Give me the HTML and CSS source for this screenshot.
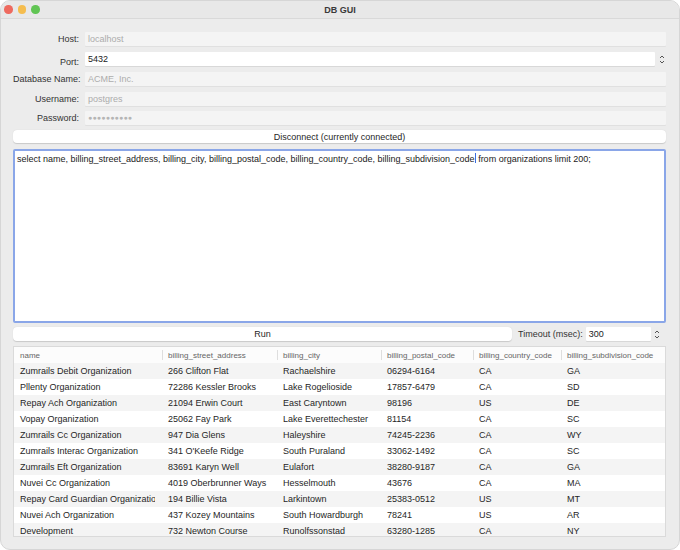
FILE: index.html
```html
<!DOCTYPE html>
<html lang="en">
  <head>
    <meta charset="UTF-8" />
    <title>DB GUI</title>
    <link rel="stylesheet" href="styles.css">
  </head>
  <body>
    <div class="window">
      <!-- Title bar -->
      <div class="titlebar">
        <div class="lights">
          <span class="light red"></span>
          <span class="light yellow"></span>
          <span class="light green"></span>
        </div>
        <div class="title">DB GUI</div>
      </div>

      <div class="content">
        <!-- Connection form -->
        <div class="form">
          <label>Host:</label>
          <div class="field disabled">localhost</div>

          <label class="port-label">Port:</label>
          <div class="spin-row">
            <div class="field white">5432</div>
            <span class="spinner">
              <svg width="8" height="13" viewBox="0 0 8 13">
                <path d="M2 5 L4 3 L6 5" fill="none" stroke="#555" stroke-width="1" />
                <path d="M2 8 L4 10 L6 8" fill="none" stroke="#555" stroke-width="1" />
              </svg>
            </span>
          </div>

          <label>Database Name:</label>
          <div class="field disabled">ACME, Inc.</div>

          <label>Username:</label>
          <div class="field disabled">postgres</div>

          <label>Password:</label>
          <div class="field disabled dots">●●●●●●●●●●</div>
        </div>

        <button class="btn">Disconnect (currently connected)</button>

        <!-- Query editor -->
        <div class="editor">select name, billing_street_address, billing_city, billing_postal_code, billing_country_code, billing_subdivision_code<span class="caret"></span> from organizations limit 200;</div>

        <div class="run-row">
          <button class="btn run">Run</button>
          <span class="timeout-label">Timeout (msec):</span>
          <div class="field white timeout">300</div>
          <span class="spinner">
            <svg width="8" height="13" viewBox="0 0 8 13">
              <path d="M2 5 L4 3 L6 5" fill="none" stroke="#555" stroke-width="1" />
              <path d="M2 8 L4 10 L6 8" fill="none" stroke="#555" stroke-width="1" />
            </svg>
          </span>
        </div>

        <!-- Results -->
        <div class="results">
          <table>
            <colgroup>
              <col style="width: 148px" />
              <col style="width: 115px" />
              <col style="width: 104px" />
              <col style="width: 92px" />
              <col style="width: 88px" />
              <col />
            </colgroup>
            <thead>
              <tr>
                <th>name</th>
                <th>billing_street_address</th>
                <th>billing_city</th>
                <th>billing_postal_code</th>
                <th>billing_country_code</th>
                <th>billing_subdivision_code</th>
              </tr>
            </thead>
            <tbody>
              <tr><td>Zumrails Debit Organization</td><td>266 Clifton Flat</td><td>Rachaelshire</td><td>06294-6164</td><td>CA</td><td>GA</td></tr>
              <tr><td>Pllenty Organization</td><td>72286 Kessler Brooks</td><td>Lake Rogelioside</td><td>17857-6479</td><td>CA</td><td>SD</td></tr>
              <tr><td>Repay Ach Organization</td><td>21094 Erwin Court</td><td>East Caryntown</td><td>98196</td><td>US</td><td>DE</td></tr>
              <tr><td>Vopay Organization</td><td>25062 Fay Park</td><td>Lake Everettechester</td><td>81154</td><td>CA</td><td>SC</td></tr>
              <tr><td>Zumrails Cc Organization</td><td>947 Dia Glens</td><td>Haleyshire</td><td>74245-2236</td><td>CA</td><td>WY</td></tr>
              <tr><td>Zumrails Interac Organization</td><td>341 O'Keefe Ridge</td><td>South Puraland</td><td>33062-1492</td><td>CA</td><td>SC</td></tr>
              <tr><td>Zumrails Eft Organization</td><td>83691 Karyn Well</td><td>Eulafort</td><td>38280-9187</td><td>CA</td><td>GA</td></tr>
              <tr><td>Nuvei Cc Organization</td><td>4019 Oberbrunner Ways</td><td>Hesselmouth</td><td>43676</td><td>CA</td><td>MA</td></tr>
              <tr><td>Repay Card Guardian Organization</td><td>194 Billie Vista</td><td>Larkintown</td><td>25383-0512</td><td>US</td><td>MT</td></tr>
              <tr><td>Nuvei Ach Organization</td><td>437 Kozey Mountains</td><td>South Howardburgh</td><td>78241</td><td>US</td><td>AR</td></tr>
              <tr><td>Development</td><td>732 Newton Course</td><td>Runolfssonstad</td><td>63280-1285</td><td>CA</td><td>NY</td></tr>
            </tbody>
          </table>
        </div>
      </div>
    </div>
  </body>
</html>
```

FILE: styles.css
```css
body {
  margin: 0;
  background-color: #ffffff;
  font-family: "Liberation Sans", Arial, sans-serif;
  font-size: 9px;
  color: #262626;
}
.window {
  width: 680px;
  height: 550px;
  box-sizing: border-box;
  background-color: #ececec;
  border: 1px solid #d6d6d6;
  border-radius: 10px;
  overflow: hidden;
}
/* Title bar */
.titlebar {
  position: relative;
  height: 17px;
  background-color: #e8e8e8;
  border-bottom: 1px solid #d9d9d9;
  display: flex;
  align-items: center;
  justify-content: center;
}
.lights {
  position: absolute;
  left: 3px;
  top: 4px;
  display: flex;
  gap: 5px;
}
.light {
  width: 8.5px;
  height: 8.5px;
  border-radius: 50%;
}
.red {
  background-color: #ee6a5f;
}
.yellow {
  background-color: #f5bd4f;
}
.green {
  background-color: #61c554;
}
.title {
  font-weight: bold;
  color: #3a3a3a;
}
.content {
  padding: 13px 13px 0 12px;
}
/* Form */
.form {
  display: grid;
  grid-template-columns: 66px 1fr;
  column-gap: 6px;
  row-gap: 5.5px;
  align-items: center;
}
.form label {
  text-align: right;
  white-space: nowrap;
  color: #333333;
}
.port-label {
  padding-top: 5px;
}
.field {
  height: 14px;
  line-height: 14px;
  padding: 0 3px;
  box-sizing: border-box;
  border-radius: 1px;
}
.disabled {
  background-color: #f4f4f4;
  color: #acacac;
  box-shadow: 0 1px 0 #e0e0e0;
}
.white {
  background-color: #ffffff;
  color: #222222;
  box-shadow: 0 1px 0 #d8d8d8;
}
.dots {
  font-size: 7px;
  letter-spacing: 0.2px;
  color: #b5b5b5;
}
.spin-row {
  display: flex;
  align-items: center;
  gap: 2px;
}
.spin-row .field {
  flex: 1;
}
.spinner {
  width: 9px;
  height: 13px;
  display: flex;
  align-items: center;
  justify-content: center;
}
/* Buttons */
.btn {
  display: block;
  width: 100%;
  height: 13px;
  margin-top: 5px;
  padding: 0;
  border: none;
  border-radius: 4px;
  background-color: #ffffff;
  box-shadow: 0 0.5px 1px rgba(0, 0, 0, 0.15);
  font-family: inherit;
  font-size: 9px;
  color: #262626;
}
/* Editor */
.editor {
  margin-top: 6px;
  height: 174px;
  box-sizing: border-box;
  background-color: #ffffff;
  border: 2px solid #8aa6e8;
  border-radius: 2px;
  padding: 2px 2px;
  line-height: 12px;
  color: #222222;
}
.caret {
  display: inline-block;
  width: 1px;
  height: 10px;
  vertical-align: -1px;
  background-color: #3d6ee0;
}
/* Run row */
.run-row {
  display: flex;
  align-items: center;
  margin-top: 4px;
  gap: 2px;
}
.run-row .btn {
  margin-top: 0;
  width: 499px;
  height: 14px;
}
.timeout-label {
  margin-left: 4px;
  color: #333333;
}
.timeout {
  width: 65px;
  height: 14px;
  margin-left: 1px;
}
/* Results table */
.results {
  margin-top: 5px;
  background-color: #ffffff;
  border: 1px solid #dadada;
  height: 191px;
  box-sizing: border-box;
  overflow: hidden;
}
table {
  width: 100%;
  table-layout: fixed;
  border-collapse: separate;
  border-spacing: 0;
}
th {
  height: 16px;
  font-size: 8px;
  font-weight: normal;
  color: #666666;
  text-align: left;
  padding: 0 0 0 6px;
  background-color: #fcfcfc;
  white-space: nowrap;
  overflow: hidden;
  background-image: linear-gradient(#dedede, #dedede);
  background-size: 1px 10px;
  background-position: left center;
  background-repeat: no-repeat;
}
th:first-child {
  background-image: none;
}
td {
  height: 16px;
  padding: 0 0 0 6px;
  border-right: 7px solid transparent;
  white-space: nowrap;
  overflow: hidden;
  color: #262626;
}
tbody tr:nth-child(odd) {
  background-color: #f4f4f4;
}
```
